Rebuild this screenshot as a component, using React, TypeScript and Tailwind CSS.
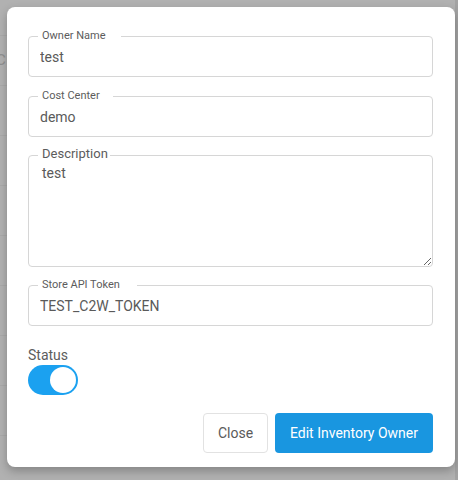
import { useState } from "react";

const rows = [0, 1, 2, 3, 4, 5, 6, 7, 8];

function Field({ label, value, pr }: { label: string; value: string; pr: string }) {
  return (
    <div className="relative">
      <input
        defaultValue={value}
        className="w-full h-[41px] border border-[#d6d6d6] rounded-[4px] pl-[11px] text-[14px] text-[#5a5a5a] outline-none bg-white"
      />
      <span
        className={`absolute left-[10px] top-[-7px] pl-1 bg-white text-[11px] leading-[14px] text-[#5c5c5c] ${pr}`}
      >
        {label}
      </span>
    </div>
  );
}

export default function App() {
  const [status, setStatus] = useState(true);

  return (
    <div className="relative w-[458px] h-[480px] overflow-hidden bg-[#b1b1b1] font-['Roboto',sans-serif]">
      {/* page behind the overlay */}
      <div className="flex flex-col pt-[35px]">
        {rows.map((r) => (
          <div
            key={r}
            className="h-[50px] border-t border-[#a9a9a9] flex items-center text-[#8f8f8f] text-[15px]"
          >
            <span className="-ml-[4px]">{r === 0 ? "C" : ""}</span>
          </div>
        ))}
      </div>
      <div className="absolute top-0 right-0 w-[3px] h-full bg-[#a3a3a3]" />

      {/* modal */}
      <div className="absolute left-[7px] top-[7px] w-[448px] bg-white rounded-[8px] shadow-[0_4px_10px_rgba(0,0,0,0.25)] pt-[29px] pl-[21px] pr-[22px] pb-[14px]">
        <div className="flex flex-col">
          <Field label="Owner Name" value="test" pr="pr-[15px]" />
          <div className="mt-[19px]">
            <Field label="Cost Center" value="demo" pr="pr-[13px]" />
          </div>
          <div className="relative mt-[18px]">
            <textarea
              defaultValue="test"
              className="block w-full h-[112px] border border-[#d6d6d6] rounded-[4px] pl-[13px] pt-[7px] text-[14px] leading-[20px] text-[#5a5a5a] outline-none bg-white"
            />
            <span className="absolute left-[10px] top-[-9px] pl-1 pr-[2px] bg-white text-[13px] leading-[16px] text-[#5c5c5c]">
              Description
            </span>
          </div>
          <div className="mt-[18px]">
            <Field label="Store API Token" value="TEST_C2W_TOKEN" pr="pr-[17px]" />
          </div>

          <div className="mt-[19px] text-[14px] leading-[20px] text-[#5c5c5c]">Status</div>
          <button
            onClick={() => setStatus(!status)}
            className={`relative w-[50px] h-[30px] rounded-full ${
              status ? "bg-[#1ba1f0]" : "bg-[#ccc]"
            }`}
          >
            <span
              className={`absolute top-[2px] w-[26px] h-[26px] rounded-full bg-white ${
                status ? "left-[22px]" : "left-[2px]"
              }`}
            />
          </button>

          <div className="flex justify-end gap-[7px] mt-[18px]">
            <button className="h-[40px] w-[65px] border border-[#e2e2e2] rounded-[4px] bg-white text-[14px] text-[#5a5a5a]">
              Close
            </button>
            <button className="h-[40px] w-[158px] rounded-[4px] bg-[#1996e0] text-[14px] text-white">
              Edit Inventory Owner
            </button>
          </div>
        </div>
      </div>
    </div>
  );
}
